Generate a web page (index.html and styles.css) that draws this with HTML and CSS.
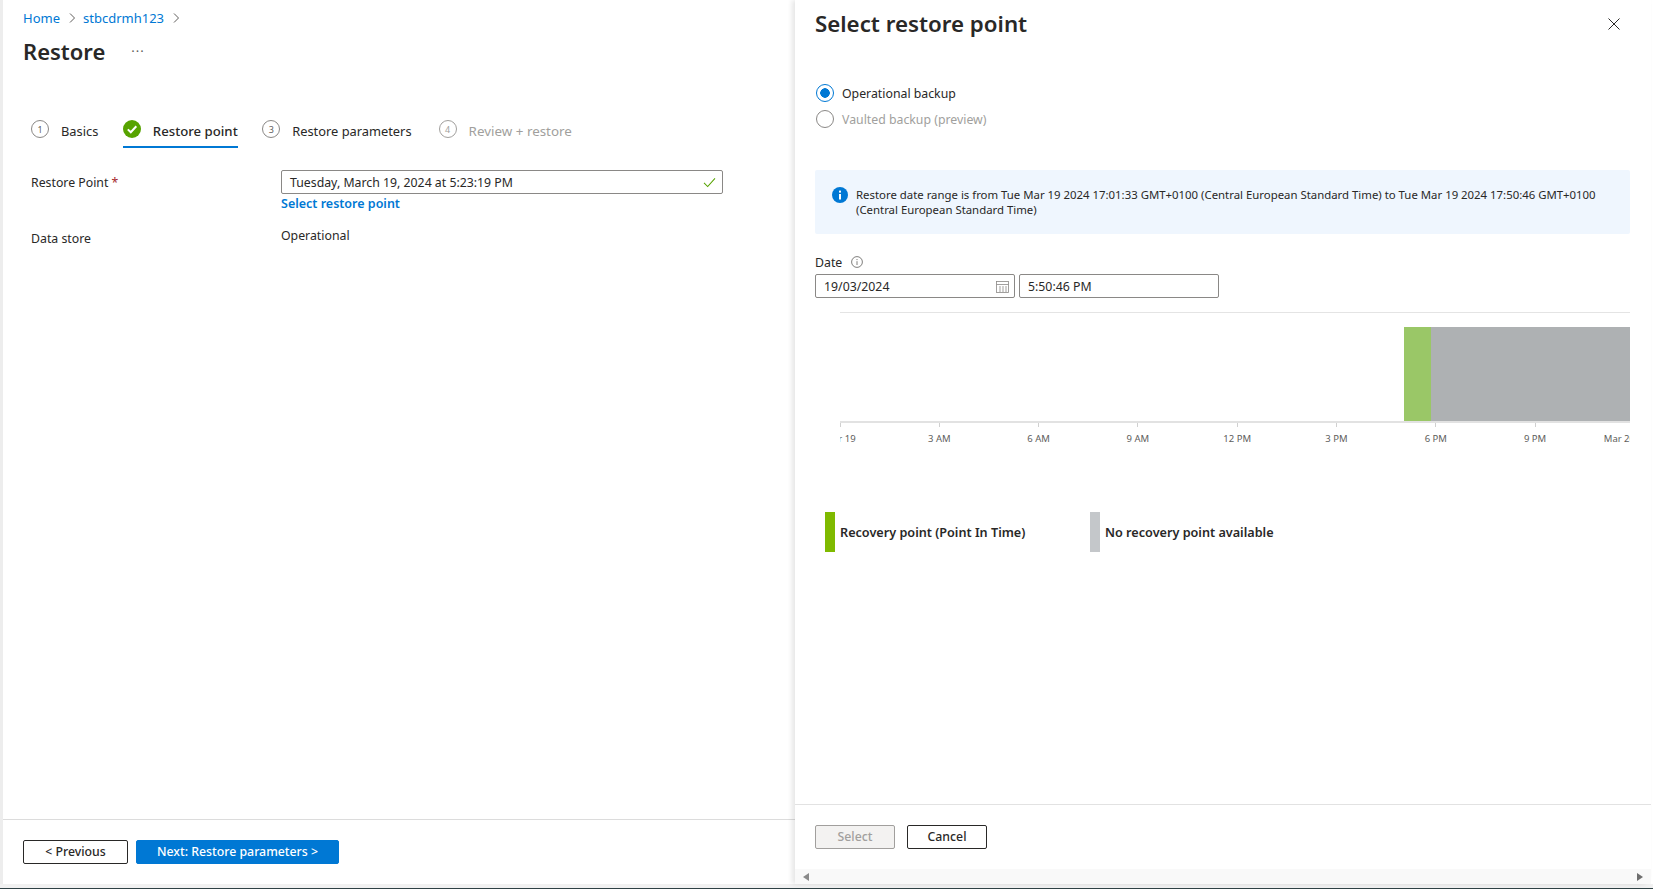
FILE: index.html
```html
<!DOCTYPE html>
<html lang="en">
  <head>
    <meta charset="UTF-8" />
    <title>Restore</title>
    <link rel="stylesheet" href="styles.css">
  </head>
  <body>
    <div class="main">
      <div class="blade">
        <div class="blade-body">
          <nav class="crumbs">
            <a>Home</a>
            <svg class="chev" viewBox="0 0 8 12"><path d="M2 1.5 6.5 6 2 10.5" /></svg>
            <a>stbcdrmh123</a>
            <svg class="chev" viewBox="0 0 8 12"><path d="M2 1.5 6.5 6 2 10.5" /></svg>
          </nav>
          <div class="title-row">
            <h1>Restore</h1>
            <span class="more">···</span>
          </div>

          <div class="tabs">
            <div class="tab"><span class="step">1</span>Basics</div>
            <div class="tab active">
              <svg class="step-done" viewBox="0 0 18 18">
                <circle cx="9" cy="9" r="9" />
                <path d="M4.8 9.4 7.8 12.3 13.3 6.3" />
              </svg>
              Restore point
            </div>
            <div class="tab"><span class="step">3</span>Restore parameters</div>
            <div class="tab off"><span class="step">4</span>Review + restore</div>
          </div>

          <div class="form-row first">
            <label>Restore Point <span class="req">*</span></label>
            <div>
              <div class="field wide">
                Tuesday, March 19, 2024 at 5:23:19 PM
                <svg class="tick" viewBox="0 0 14 12"><path d="M1 6.5 5 10.5 13 1.5" /></svg>
              </div>
              <a class="pick">Select restore point</a>
            </div>
          </div>
          <div class="form-row store">
            <label>Data store</label>
            <div class="value">Operational</div>
          </div>
        </div>
        <div class="blade-foot">
          <button class="btn prev">&lt; Previous</button>
          <button class="btn primary">Next: Restore parameters &gt;</button>
        </div>
      </div>

      <aside class="panel">
        <div class="panel-body">
          <div class="panel-head">
            <h2>Select restore point</h2>
            <svg class="close" viewBox="0 0 12 12"><path d="M.5.5 11.5 11.5M11.5.5.5 11.5" /></svg>
          </div>

          <div class="radios">
            <div class="radio on"><span class="dot"></span>Operational backup</div>
            <div class="radio off"><span class="dot"></span>Vaulted backup (preview)</div>
          </div>

          <div class="info">
            <svg class="info-icon" viewBox="0 0 16 16">
              <circle cx="8" cy="8" r="8" />
              <rect x="7" y="7" width="2" height="5.5" fill="#fff" />
              <rect x="7" y="3.6" width="2" height="2" fill="#fff" />
            </svg>
            <p>Restore date range is from Tue Mar 19 2024 17:01:33 GMT+0100 (Central European Standard Time) to Tue Mar 19 2024 17:50:46 GMT+0100 (Central European Standard Time)</p>
          </div>

          <div class="date-label">
            Date
            <svg class="hint" viewBox="0 0 12 12">
              <circle cx="6" cy="6" r="5.4" />
              <path d="M6 5.2V9M6 3V4.1" />
            </svg>
          </div>
          <div class="date-row">
            <div class="field date">
              19/03/2024
              <svg class="cal" viewBox="0 0 13 13">
                <rect x=".5" y="1.5" width="12" height="11" />
                <path d="M.5 4.5H12.5M3 7H5M6 7H8M9 7H11M3 9H5M6 9H8M9 9H11M3 11H5M6 11H8M9 11H11" />
              </svg>
            </div>
            <div class="field date">5:50:46 PM</div>
          </div>

          <div class="chart">
            <div class="plot">
              <div class="empty"></div>
              <div class="bar-green"></div>
              <div class="bar-grey"></div>
            </div>
            <div class="axis">
              <span>Mar 19</span>
              <span>3 AM</span>
              <span>6 AM</span>
              <span>9 AM</span>
              <span>12 PM</span>
              <span>3 PM</span>
              <span>6 PM</span>
              <span>9 PM</span>
              <span>Mar 20</span>
            </div>
          </div>

          <div class="legend">
            <div class="key"><span class="swatch green"></span>Recovery point (Point In Time)</div>
            <div class="key"><span class="swatch grey"></span>No recovery point available</div>
          </div>
        </div>

        <div class="panel-foot">
          <button class="btn disabled">Select</button>
          <button class="btn prev">Cancel</button>
        </div>
        <div class="hscroll">
          <span class="arrow left"></span>
          <span class="arrow right"></span>
        </div>
      </aside>
    </div>
    <div class="taskbar"></div>
  </body>
</html>
```

FILE: styles.css
```css
* {
  box-sizing: border-box;
}

html,
body {
  height: 100%;
}

body {
  margin: 0;
  display: flex;
  flex-direction: column;
  overflow: hidden;
  background-color: #f1f1f1;
  color: #292827;
  font-family: "Noto Sans", Arial, sans-serif;
  font-size: 12.3px;
}

.main {
  display: flex;
  height: 884px;
  background-color: #fff;
}

.taskbar {
  margin-top: 4px;
  height: 1px;
  background-color: #2f4145;
}

/* left blade */
.blade {
  width: 795px;
  display: flex;
  flex-direction: column;
  border-left: 3px solid #ededed;
}

.blade-body {
  flex: 1;
  padding: 9px 0 0 20px;
}

.crumbs {
  display: flex;
  align-items: center;
  height: 18px;
  color: #0078d4;
  font-size: 13px;
}

.chev {
  width: 8px;
  height: 12px;
  margin: 0 7px 0 8px;
  fill: none;
  stroke: #605e5c;
}

.title-row {
  display: flex;
  align-items: center;
  margin-top: 9px;
}

h1 {
  margin: 0;
  font-size: 22px;
  font-weight: 600;
  line-height: 30px;
}

.more {
  margin-left: 26px;
  color: #605e5c;
  font-size: 13px;
  letter-spacing: 1px;
}

.tabs {
  display: flex;
  margin: 50px 0 0 8px;
  gap: 24.5px;
}

.tab {
  display: flex;
  align-items: center;
  gap: 12px;
  height: 32px;
  padding-bottom: 3px;
  font-size: 12.85px;
}

.tab.active {
  font-size: 13.2px;
  font-weight: 500;
  border-bottom: 2px solid #0078d4;
  padding-bottom: 1px;
}

.tab.off {
  margin-left: 2.5px;
  color: #a19f9d;
  font-size: 13.4px;
}

.step {
  width: 18px;
  height: 18px;
  margin-top: -3px;
  display: flex;
  align-items: center;
  justify-content: center;
  border: 1px solid #8a8886;
  border-radius: 50%;
  color: #605e5c;
  font-size: 9px;
}

.tab.off .step {
  border-color: #a19f9d;
  color: #a19f9d;
}

.step-done {
  width: 18px;
  height: 18px;
  margin-top: -3px;
}

.step-done circle {
  fill: #57a300;
}

.step-done path {
  fill: none;
  stroke: #fff;
  stroke-width: 2;
}

.form-row {
  display: flex;
  margin-left: 8px;
}

.form-row label {
  width: 250px;
}

.form-row.first {
  margin-top: 22px;
}

.form-row.first label {
  padding-top: 4px;
}

.req {
  color: #a4262c;
}

.field {
  height: 24px;
  display: flex;
  align-items: center;
  justify-content: space-between;
  padding: 0 8px;
  border: 1px solid #8a8886;
  border-radius: 2px;
  background-color: #fff;
}

.field.wide {
  width: 442px;
}

.tick {
  width: 13px;
  height: 11px;
  margin-right: -2px;
  fill: none;
  stroke: #57a300;
  stroke-width: 1.1;
}

.pick {
  display: block;
  margin-top: 1px;
  color: #0078d4;
  font-size: 12.5px;
  font-weight: 600;
  line-height: 18px;
}

.form-row.store {
  margin-top: 14px;
}

.form-row.store label {
  padding-top: 3px;
}

.value {
  line-height: 18px;
}

.blade-foot {
  height: 65px;
  display: flex;
  gap: 8px;
  padding: 20px 0 0 20px;
  border-top: 1px solid #dcdcdc;
}

.btn {
  height: 24px;
  padding: 0 0 2px;
  border: 1px solid #292827;
  border-radius: 2px;
  background-color: #fff;
  color: #292827;
  font-family: inherit;
  font-size: 12.3px;
  font-weight: 500;
}

.blade-foot .prev {
  width: 105px;
}

.btn.primary {
  width: 203px;
  border-color: #0078d4;
  background-color: #0078d4;
  color: #fff;
}

.panel-foot .prev {
  width: 80px;
}

.btn.disabled {
  width: 80px;
  border-color: #a19f9d;
  background-color: #f3f2f1;
  color: #a19f9d;
}

/* right panel */
.panel {
  width: 856px;
  display: flex;
  flex-direction: column;
  border-bottom-right-radius: 6px;
  box-shadow: -3px 0 5px rgba(0, 0, 0, 0.1);
  background-color: #fff;
}

.panel-body {
  flex: 1;
  padding: 0 21px 0 20px;
}

.panel-head {
  display: flex;
  align-items: center;
  justify-content: space-between;
  height: 48px;
}

h2 {
  margin: 0 0 2px;
  font-size: 22.3px;
  font-weight: 600;
}

.close {
  width: 12px;
  height: 12px;
  margin-right: 10px;
  fill: none;
  stroke: #292827;
}

.radios {
  margin-top: 36px;
  margin-left: 1px;
}

.radio {
  display: flex;
  align-items: center;
  gap: 8px;
  height: 18px;
  margin-bottom: 8px;
}

.dot {
  width: 18px;
  height: 18px;
  border: 1px solid #8a8886;
  border-radius: 50%;
}

.radio.on .dot {
  border-color: #0078d4;
  background: radial-gradient(circle, #0078d4 0 4.5px, #fff 5px);
}

.radio.off {
  color: #a19f9d;
}

.info {
  display: flex;
  gap: 8px;
  height: 64px;
  margin-top: 42px;
  padding: 17px 15px 0 17px;
  border-radius: 2px;
  background-color: #eff6fe;
  font-size: 11.39px;
  line-height: 15px;
}

.info-icon {
  flex: none;
  width: 16px;
  height: 16px;
  fill: #0078d4;
}

.info p {
  margin: 0;
}

.date-label {
  display: flex;
  align-items: center;
  gap: 9px;
  height: 18px;
  margin-top: 19px;
}

.hint {
  width: 12px;
  height: 12px;
  fill: none;
  stroke: #605e5c;
  stroke-width: .8;
}

.date-row {
  display: flex;
  gap: 4px;
  margin-top: 3px;
}

.field.date {
  width: 200px;
}

.cal {
  width: 13px;
  height: 13px;
  margin-right: -3px;
  fill: none;
  stroke: #8a8886;
  stroke-width: .8;
}

.chart {
  margin: 14px 0 0 25px;
  border-top: 1px solid #e4e4e4;
}

.plot {
  display: flex;
  height: 96px;
  margin-top: 14px;
  border-bottom: 2px solid #e2e2e2;
}

.empty {
  width: 564px;
}

.bar-green {
  width: 27px;
  background-color: #9ac767;
}

.bar-grey {
  flex: 1;
  background-color: #aeb1b3;
}

.axis {
  display: flex;
  overflow: hidden;
  color: #605e5c;
  font-size: 9.5px;
}

.axis span {
  flex: none;
  width: 99.3px;
  height: 26px;
  padding-top: 9px;
  text-align: center;
  background: linear-gradient(#d0d0d0, #d0d0d0) center top / 1px 4px no-repeat;
}

.axis span:first-child {
  margin-left: -49.65px;
}

.axis span:last-child {
  margin-left: -15px;
  background: none;
}

.legend {
  display: flex;
  margin: 63px 0 0 10px;
}

.key {
  display: flex;
  align-items: center;
  gap: 5px;
  width: 265px;
  font-size: 12.65px;
  font-weight: 600;
}

.swatch {
  width: 10px;
  height: 40px;
}

.swatch.green {
  background-color: #7fba00;
}

.swatch.grey {
  background-color: #c4c7ca;
}

.panel-foot {
  height: 65px;
  display: flex;
  gap: 12px;
  padding: 20px 0 0 20px;
  border-top: 1px solid #e2e2e2;
}

.hscroll {
  height: 15px;
  display: flex;
  align-items: center;
  justify-content: space-between;
  padding: 0 8px;
  background-color: #f9f9f9;
}

.arrow {
  width: 0;
  height: 0;
  border-top: 4px solid transparent;
  border-bottom: 4px solid transparent;
}

.arrow.left {
  border-right: 6px solid #8a8a8a;
}

.arrow.right {
  border-left: 6px solid #6e6e6e;
}
```
